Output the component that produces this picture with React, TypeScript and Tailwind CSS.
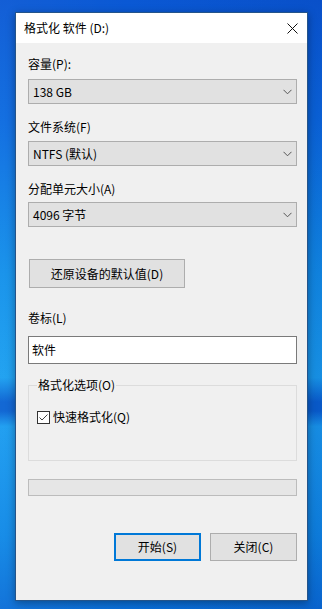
import React from "react";

function Chevron() {
  return (
    <svg width="9" height="6" viewBox="0 0 9 6" fill="none">
      <path d="M0.5 0.8 L4.5 4.8 L8.5 0.8" stroke="#555" strokeWidth="1" />
    </svg>
  );
}

function Select({ value }: { value: string }) {
  return (
    <div className="h-[25px] border border-[#adadad] bg-[#e1e1e1] flex items-center justify-between pl-[4px] pr-[4px]">
      <span className="text-[12px] leading-[16px] text-black">{value}</span>
      <Chevron />
    </div>
  );
}

function Label({ text, className }: { text: string; className: string }) {
  return <div className={"text-[12px] leading-[16px] text-black " + className}>{text}</div>;
}

export default function App() {
  return (
    <div className="w-[322px] h-[609px] overflow-hidden pt-[12px] pl-[15px] bg-[image:linear-gradient(90deg,rgba(255,255,255,0.04)_0%,rgba(0,0,0,0)_40%,rgba(0,20,120,0.12)_100%),linear-gradient(180deg,#0a58d4_0%,#0b6ae0_20%,#1290ea_45%,#1a9ff0_62%,#0a62d2_66%,#0a62d2_67.5%,#1a9cf0_70%,#0f88e6_88%,#0a6ed8_100%)] font-['Noto_Sans_CJK_SC','Noto_Sans',sans-serif]">
      <div className="w-[293px] h-[589px] border border-[#24548a] bg-[#f0f0f0] flex flex-col shadow-[0_2px_8px_rgba(0,0,0,0.35)]">
        <div className="h-[30px] bg-white flex items-center pl-[8px]">
          <span className="text-[12px] leading-[16px] text-black">格式化 软件 (D:)</span>
          <svg className="ml-auto mr-[9px]" width="11" height="11" viewBox="0 0 11 11" fill="none">
            <path d="M0.5 0.5 L10.5 10.5 M10.5 0.5 L0.5 10.5" stroke="#111" strokeWidth="1" />
          </svg>
        </div>
        <div className="flex flex-col pl-[12px] pr-[10px]">
          <Label text="容量(P):" className="mt-[13px]" />
          <div className="mt-[7px]">
            <Select value="138 GB" />
          </div>
          <Label text="文件系统(F)" className="mt-[15px]" />
          <div className="mt-[6px]">
            <Select value="NTFS (默认)" />
          </div>
          <Label text="分配单元大小(A)" className="mt-[15px]" />
          <div className="mt-[5px]">
            <Select value="4096 字节" />
          </div>
          <div className="mt-[32px] ml-[1px] w-[156px] h-[29px] border border-[#adadad] bg-[#e1e1e1] flex items-center justify-center">
            <span className="text-[12px] leading-[16px] text-black">还原设备的默认值(D)</span>
          </div>
          <Label text="卷标(L)" className="mt-[22px]" />
          <div className="mt-[10px] h-[28px] border border-[#7a7a7a] bg-white flex items-center pl-[3px]">
            <span className="text-[12px] leading-[16px] text-black">软件</span>
          </div>
          <div className="mt-[21px] h-[76px] border border-[#dcdcdc] relative">
            <span className="absolute left-[8px] top-[-9px] px-[1px] bg-[#f0f0f0] text-[12px] leading-[16px] text-black">
              格式化选项(O)
            </span>
            <div className="mt-[23px] ml-[8px] flex items-center">
              <div className="w-[13px] h-[13px] border border-[#333] bg-white flex items-center justify-center">
                <svg width="11" height="11" viewBox="0 0 11 11" fill="none">
                  <path d="M1.5 5.5 L4 8 L9.5 2.5" stroke="#444" strokeWidth="1" />
                </svg>
              </div>
              <span className="ml-[3px] text-[12px] leading-[16px] text-black">快速格式化(Q)</span>
            </div>
          </div>
          <div className="mt-[18px] h-[17px] border border-[#bcbcbc] bg-[#e6e6e6]" />
          <div className="mt-[37px] flex justify-end gap-[9px]">
            <div className="w-[87px] h-[28px] border-2 border-[#0078d7] bg-[#e1e1e1] flex items-center justify-center">
              <span className="text-[12px] leading-[16px] text-black">开始(S)</span>
            </div>
            <div className="w-[87px] h-[28px] border border-[#adadad] bg-[#e1e1e1] flex items-center justify-center">
              <span className="text-[12px] leading-[16px] text-black">关闭(C)</span>
            </div>
          </div>
        </div>
      </div>
    </div>
  );
}
